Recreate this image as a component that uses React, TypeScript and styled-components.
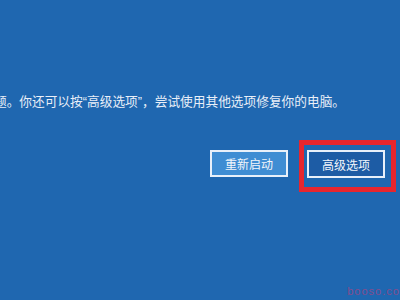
import React from "react";
import styled, { createGlobalStyle } from "styled-components";

const Global = createGlobalStyle`
  html, body { margin: 0; padding: 0; background: #1f67b0; }
  #root { width: 400px; height: 300px; }
`;

const Screen = styled.div`
  width: 400px;
  height: 300px;
  overflow: hidden;
  background: #1f67b0;
  display: flex;
  flex-direction: column;
  font-family: "Liberation Sans", "Noto Sans CJK SC", sans-serif;
  color: #e9eff8;
`;

const Message = styled.p`
  margin: 94px 0 0 -6px;
  font-size: 12.7px;
  line-height: 16px;
  white-space: nowrap;
`;

const ButtonRow = styled.div`
  margin-top: 30px;
  padding-right: 4px;
  display: flex;
  justify-content: flex-end;
  align-items: flex-start;
  gap: 11px;
`;

const Button = styled.button<{ $primary?: boolean }>`
  box-sizing: border-box;
  width: 78px;
  height: ${(p) => (p.$primary ? 28 : 27)}px;
  margin-top: ${(p) => (p.$primary ? 0 : 10)}px;
  border: 2px solid #e8f0fa;
  background: ${(p) => (p.$primary ? "#1d5ca5" : "#3f8dd3")};
  color: #f2f6fb;
  font-family: "Liberation Sans", "Noto Sans CJK SC", sans-serif;
  font-size: 12px;
  padding: 0;
  display: flex;
  align-items: center;
  justify-content: center;
`;

const Highlight = styled.div`
  border: 5px solid #e7262e;
  padding: 5px 6px 9px 3px;
  display: flex;
`;

const Spacer = styled.div`
  flex: 1;
`;

const Watermark = styled.div`
  align-self: flex-end;
  margin: 0 -10px 3px 0;
  font-size: 11px;
  line-height: 12px;
  color: #b8407c;
  opacity: 0.65;
  letter-spacing: 1px;
`;

export default function App() {
  return (
    <>
      <Global />
      <Screen>
        <Message>
          题。你还可以按“高级选项”，尝试使用其他选项修复你的电脑。
        </Message>
        <ButtonRow>
          <Button>重新启动</Button>
          <Highlight>
            <Button $primary>高级选项</Button>
          </Highlight>
        </ButtonRow>
        <Spacer />
        <Watermark>booso.com</Watermark>
      </Screen>
    </>
  );
}
